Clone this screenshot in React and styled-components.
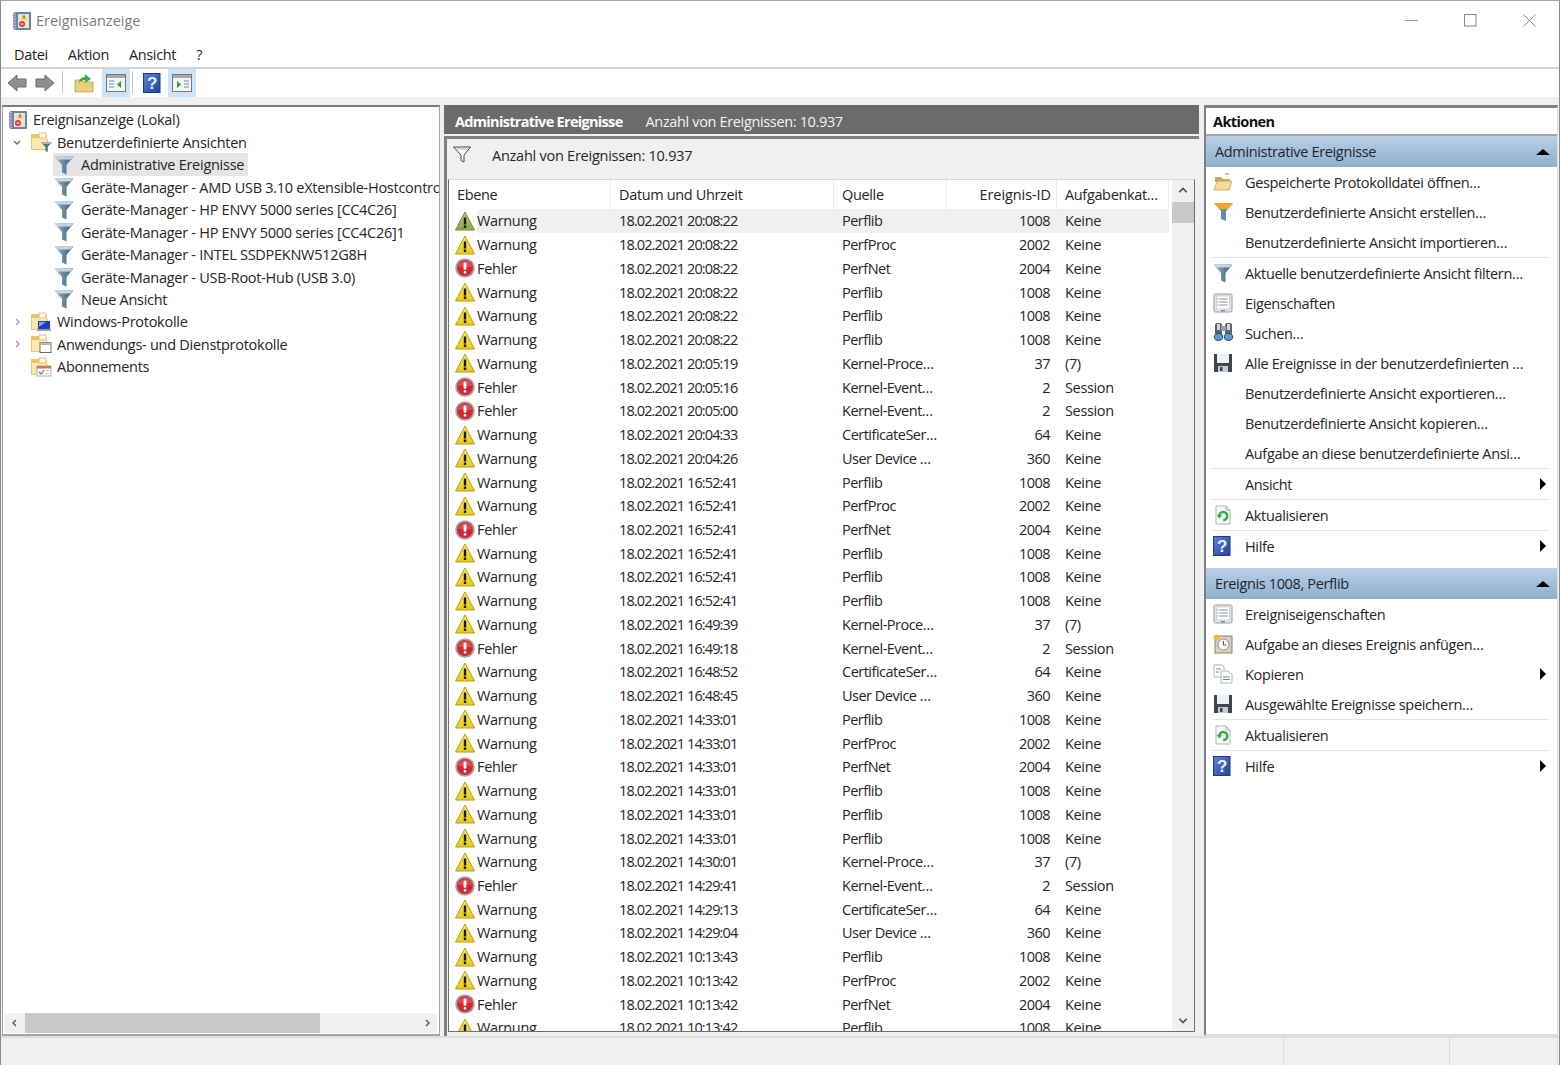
import React from "react";
import styled, { createGlobalStyle } from "styled-components";

const Global = createGlobalStyle`
  html, body { margin: 0; padding: 0; background: #fff; }
  * { box-sizing: border-box; }
  body {
    font-family: "Open Sans", "Noto Sans", "Liberation Sans", sans-serif;
    font-size: 14.5px;
    letter-spacing: -0.35px;
    color: #262626;
  }
`;

const Page = styled.div`
  width: 1560px;
  height: 1065px;
  display: flex;
  flex-direction: column;
  overflow: hidden;
  background: #f0f0f0;
  border-left: 1px solid #8a8a8a;
  border-right: 1px solid #8a8a8a;
  border-top: 1px solid #a8a8a8;
`;

const TitleBar = styled.div`
  height: 41px;
  flex: none;
  background: #fff;
  display: flex;
  align-items: center;
  padding: 0 0 2px 11px;
  gap: 4px;
  color: #7d7d7d;
  letter-spacing: -0.02px;
`;

const WindowButtons = styled.div`
  margin-left: auto;
  display: flex;
  align-items: center;
  gap: 46px;
  padding-right: 23px;
`;

const MenuBar = styled.div`
  height: 27px;
  flex: none;
  background: #fff;
  display: flex;
  align-items: center;
  gap: 20px;
  padding-left: 13px;
  border-bottom: 2px solid #d4d4d4;
  color: #1f1f1f;
`;

const Toolbar = styled.div`
  height: 28px;
  flex: none;
  background: #fff;
  display: flex;
  align-items: stretch;
  padding-left: 3px;
`;

const ToolButton = styled.div`
  width: ${(p) => p.$w || 28}px;
  display: flex;
  align-items: center;
  justify-content: center;
  background: ${(p) => (p.$active ? "#cce4f7" : "transparent")};
`;

const ToolSep = styled.div`
  width: 1px;
  margin: 2px 2px 3px;
  background: #c8c8c8;
`;

const Panels = styled.div`
  flex: 1;
  min-height: 0;
  display: flex;
  padding-top: 8px;
`;

const TreePanel = styled.div`
  width: 438px;
  margin-left: 1px;
  display: flex;
  flex-direction: column;
  background: #fff;
  border: 1px solid #a4a4a4;
  border-top: 2px solid #7d7d7d;
  border-bottom-width: 2px;
`;

const Tree = styled.div`
  flex: 1;
  padding-top: 1.5px;
  overflow: hidden;
  letter-spacing: -0.27px;
`;

const TreeRow = styled.div`
  height: 22.48px;
  display: flex;
  align-items: center;
  white-space: nowrap;
  padding-left: ${(p) => p.$indent}px;
`;

const Chevron = styled.span`
  width: 20px;
  flex: none;
  display: flex;
  justify-content: center;
  padding-right: 5px;
`;

const TreeLabel = styled.span`
  display: inline-flex;
  align-items: center;
  height: 22.48px;
  gap: ${(p) => p.$gap || 5}px;
  padding: 0 4px 0 1px;
  background: ${(p) => (p.$selected ? "#e5e5e5" : "transparent")};
`;

const HScroll = styled.div`
  height: 20px;
  flex: none;
  margin: 0 2px 1px;
  display: flex;
  align-items: center;
  background: #f0f0f0;
`;

const HThumb = styled.div`
  width: 295px;
  height: 20px;
  background: #c8c8c8;
`;

const ScrollEnd = styled.div`
  width: ${(p) => p.$w}px;
  height: ${(p) => p.$h}px;
  flex: none;
  display: flex;
  align-items: center;
  justify-content: center;
  margin-left: ${(p) => (p.$pushX ? "auto" : 0)};
  margin-top: ${(p) => (p.$pushY ? "auto" : 0)};
`;

const Center = styled.div`
  width: 755px;
  margin-left: 4px;
  display: flex;
  flex-direction: column;
`;

const CenterHead = styled.div`
  height: 29px;
  flex: none;
  background: #6b6b6b;
  color: #f4f4f4;
  display: flex;
  align-items: center;
  padding: 3px 0 0 11px;
  gap: 23px;
`;

const HeadTitle = styled.b`
  font-weight: 700;
  color: #fff;
  letter-spacing: -0.69px;
`;

const CenterBody = styled.div`
  flex: 1;
  min-height: 0;
  margin-top: 2px;
  display: flex;
  flex-direction: column;
  border-left: 3px solid #808080;
  border-top: 3px solid #808080;
  padding: 0 4px 4px 1px;
`;

const FilterBand = styled.div`
  height: 40px;
  flex: none;
  display: flex;
  align-items: center;
  padding: 0 0 8px 4px;
  gap: 20px;
  letter-spacing: -0.25px;
`;

const TableBox = styled.div`
  flex: 1;
  min-height: 0;
  display: flex;
  background: #fff;
  border-top: 1px solid #d8d8d8;
  border-right: 1px solid #6d6d6d;
  border-bottom: 1px solid #6d6d6d;
  border-left: 1px solid #6d6d6d;
`;

const TableMain = styled.div`
  flex: 1;
  min-width: 0;
  overflow: hidden;
`;

const columns = "162px 223px 113px 110px 112px";

const HeadRow = styled.div`
  display: grid;
  grid-template-columns: ${columns};
  height: 29.1px;
`;

const HeadCell = styled.div`
  display: flex;
  align-items: center;
  padding: 0 ${(p) => (p.$right ? 5 : 7)}px 0 8px;
  justify-content: ${(p) => (p.$right ? "flex-end" : "flex-start")};
  letter-spacing: ${(p) => (p.$right ? "-0.08px" : "inherit")};
  border-right: 1px solid #ececec;
  white-space: nowrap;
`;

const DataRow = styled.div`
  display: grid;
  grid-template-columns: ${columns};
  height: 23.74px;
  align-items: center;
`;

const LevelCell = styled.div`
  display: flex;
  align-items: center;
  gap: 2px;
  height: 100%;
  padding-left: 6px;
`;

const LevelText = styled.span`
  display: flex;
  align-items: center;
  height: 100%;
  flex: 1;
  background: ${(p) => (p.$selected ? "#f0f0f0" : "transparent")};
`;

const Cell = styled.div`
  display: flex;
  align-items: center;
  height: 100%;
  padding: 0 7px 0 8px;
  white-space: nowrap;
  letter-spacing: ${(p) => p.$spacing || "inherit"};
  justify-content: ${(p) => (p.$right ? "flex-end" : "flex-start")};
  background: ${(p) => (p.$selected ? "#f0f0f0" : "transparent")};
`;

const VScroll = styled.div`
  width: 22px;
  flex: none;
  display: flex;
  flex-direction: column;
  background: #f0f0f0;
`;

const VThumb = styled.div`
  height: 21px;
  background: #c8c8c8;
`;

const ActionsPanel = styled.div`
  width: 354px;
  margin-left: 5px;
  display: flex;
  flex-direction: column;
  background: #fff;
  border-left: 2px solid #808080;
  border-top: 3px solid #808080;
  border-bottom: 2px solid #dcdcdc;
  border-right: 1px solid #dcdcdc;
`;

const ActionsTitle = styled.div`
  height: 28px;
  flex: none;
  display: flex;
  align-items: center;
  padding: 1px 0 0 7px;
  font-weight: 700;
  color: #111;
  letter-spacing: -0.6px;
  border-bottom: 2px solid #a8a8a8;
`;

const SectionHead = styled.div`
  height: 31px;
  flex: none;
  margin-top: ${(p) => p.$gap || 0}px;
  display: flex;
  align-items: center;
  justify-content: space-between;
  padding: 0 7px 0 9px;
  background: linear-gradient(#b9d0e7, #8fafcf);
  color: #1c2530;
`;

const ActionRow = styled.div`
  height: ${(p) => p.$h || 30}px;
  flex: none;
  display: flex;
  align-items: center;
  padding-left: 7px;
  white-space: nowrap;
`;

const ActionIcon = styled.span`
  width: 32px;
  flex: none;
  display: flex;
`;

const ActionArrow = styled.span`
  margin-left: auto;
  width: 0;
  height: 0;
  margin-right: 11px;
  border-left: 6px solid #000;
  border-top: 6px solid transparent;
  border-bottom: 6px solid transparent;
`;

const UpTriangle = styled.span`
  width: 0;
  height: 0;
  border-bottom: 6px solid #000;
  border-left: 7px solid transparent;
  border-right: 7px solid transparent;
`;

const ActionSep = styled.div`
  height: 1px;
  flex: none;
  margin: 0 8px 0 6px;
  background: #e4e4e4;
`;

const StatusBar = styled.div`
  height: 29px;
  flex: none;
  display: flex;
  justify-content: flex-end;
  border-top: 2px solid #dedede;
`;

const StatusCell = styled.div`
  width: ${(p) => p.$w}px;
  border-left: 1px solid #dcdcdc;
`;

// icons, all hand drawn on a 20 unit grid
const Svg = ({ size = 20, w, h, children }) => (
  <svg width={w || size} height={h || size} viewBox={`0 0 ${w || size} ${h || size}`} style={{ flex: "none" }}>
    {children}
  </svg>
);

const BookIcon = () => (
  <Svg size={20}>
    <rect x="2" y="1" width="17" height="18" rx="1" fill="#6b82a8" />
    <rect x="1" y="2" width="3" height="16" fill="#aab4c6" />
    <path d="M1 4h3M1 7h3M1 10h3M1 13h3M1 16h3" stroke="#5a6a84" strokeWidth=".8" />
    <rect x="6" y="3" width="11" height="14" fill="#e9e2cf" />
    <path d="M12 3l3 5.5H9z" fill="#f2c230" />
    <rect x="11.5" y="4.6" width="1" height="2.6" fill="#6a4d10" />
    <circle cx="10" cy="13" r="3" fill="#cf3d45" />
    <rect x="8.6" y="12.5" width="2.8" height="1" fill="#fff" />
  </Svg>
);

const FolderBase = () => (
  <>
    <path d="M1 2h9l1 1h6v4h1v11H1z" fill="#e6c66c" />
    <rect x="2" y="6" width="15" height="11" fill="#fbe9ae" />
    <rect x="9" y="1" width="7" height="5" fill="#fff8e0" stroke="#cdb36a" strokeWidth=".7" />
  </>
);

const FolderFilterIcon = () => (
  <Svg w={22} h={20}>
    <FolderBase />
    <path d="M11 10.5h11l-4.3 4.2V20l-2.4-1.2v-4.1z" fill="#4e7790" />
    <path d="M11 10.5h11l-1.6 1.6h-7.8z" fill="#9cbacb" />
  </Svg>
);

const FolderLogIcon = () => (
  <Svg w={22} h={20}>
    <FolderBase />
    <rect x="8" y="9" width="12" height="8" fill="#1b3fb8" />
    <path d="M9 10h7l-7 5z" fill="#86a8ee" />
    <rect x="7" y="17" width="14" height="2" fill="#9a9a9a" />
  </Svg>
);

const FolderAppIcon = () => (
  <Svg w={22} h={20}>
    <FolderBase />
    <rect x="10" y="8.5" width="11" height="10" fill="#fff" stroke="#6e6e6e" />
    <rect x="10" y="8.5" width="11" height="2.5" fill="#b8b8b8" />
  </Svg>
);

const FolderSubsIcon = () => (
  <Svg w={22} h={20}>
    <FolderBase />
    <rect x="7" y="9" width="14" height="10" fill="#fff" stroke="#b0b0b0" />
    <rect x="7" y="9" width="14" height="2.5" fill="#e86a5a" />
    <path d="M9 15l2 2 3-4" stroke="#3a78c0" strokeWidth="1.2" fill="none" />
    <rect x="16" y="13" width="3" height="1" fill="#c0c0c0" />
    <rect x="16" y="16" width="3" height="1" fill="#c0c0c0" />
  </Svg>
);

const FunnelIcon = ({ id = "fn" }) => (
  <Svg size={20}>
    <defs>
      <linearGradient id={id} x1="0" y1="0" x2="1" y2="0">
        <stop offset="0" stopColor="#a4bfd2" />
        <stop offset="0.55" stopColor="#5f8299" />
        <stop offset="1" stopColor="#3f6076" />
      </linearGradient>
    </defs>
    <path d="M0.5 1.5h19l-7 8.5v9.5l-4.5-2V10z" fill={`url(#${id})`} />
    <path d="M0.5 1.5h19l-3 3H3.5z" fill="#c3d6e3" />
  </Svg>
);

const PlainFunnel = () => (
  <Svg size={20}>
    <path d="M1.5 2h17l-6.5 8v7l-3-1.5V10z" fill="#fdfdfd" stroke="#444" strokeWidth="1" />
    <path d="M4.5 4h11" stroke="#aaa" />
  </Svg>
);

const WarnIcon = ({ selected }) => (
  <Svg size={20}>
    <defs>
      <linearGradient id={selected ? "wg" : "wy"} x1="0" y1="0" x2="0" y2="1">
        <stop offset="0" stopColor={selected ? "#b4cc72" : "#fbee55"} />
        <stop offset="1" stopColor={selected ? "#8aa844" : "#e8c81c"} />
      </linearGradient>
    </defs>
    <path
      d="M10 1l9.5 18H.5z"
      fill={`url(#${selected ? "wg" : "wy"})`}
      stroke={selected ? "#72903c" : "#b89c18"}
      strokeWidth="1"
      strokeLinejoin="round"
    />
    <rect x="8.8" y="6.5" width="2.4" height="7" fill="#171717" />
    <rect x="8.8" y="14.5" width="2.4" height="2.4" fill="#171717" />
  </Svg>
);

const ErrorIcon = () => (
  <Svg size={20}>
    <circle cx="10" cy="10" r="9.8" fill="#a8a8a8" />
    <circle cx="10" cy="10" r="8" fill="#cf2a32" />
    <path d="M3 9a7 6 0 0 1 14 0z" fill="#e26a6e" opacity=".55" />
    <rect x="8.6" y="4.4" width="2.8" height="7.4" rx="1.2" fill="#fff" />
    <rect x="8.7" y="13" width="2.6" height="2.6" rx="1.2" fill="#fff" />
  </Svg>
);

const BackArrow = ({ flip }) => (
  <Svg w={22} h={20}>
    <path
      d={flip ? "M2 6h9V2l9 8-9 8v-4H2z" : "M20 6h-9V2L2 10l9 8v-4h9z"}
      fill="#8f8f8f"
      stroke="#6f6f6f"
      strokeWidth="1"
      strokeLinejoin="round"
    />
  </Svg>
);

const FolderUpIcon = () => (
  <Svg size={20}>
    <path d="M1 7h7l2 2h9v10H1z" fill="#e9cf7c" stroke="#b89a48" strokeWidth=".7" />
    <path d="M5 10c0-4 3-6 6-6V1l6 5-6 4V7c-2 0-4 1-6 3z" fill="#3faa3f" />
  </Svg>
);

const PaneIcon = ({ right }) => (
  <Svg w={20} h={18}>
    <rect x=".5" y=".5" width="19" height="17" fill="#f4f4f4" stroke="#777" />
    <rect x="1" y="1" width="18" height="3" fill="#a8a8a8" />
    {right ? (
      <>
        <path d="M5 7v7l4-3.5z" fill="#2fa04a" />
        <path d="M12 7h5M12 10h5M12 13h5" stroke="#6d88a8" strokeWidth="1.2" />
      </>
    ) : (
      <>
        <path d="M3 7h5M3 10h5M3 13h5" stroke="#6d88a8" strokeWidth="1.2" />
        <path d="M15 7v7l-4-3.5z" fill="#2fa04a" />
      </>
    )}
  </Svg>
);

const HelpText = styled.text`
  font-family: "Liberation Sans", sans-serif;
  font-weight: 700;
  font-size: 17px;
  letter-spacing: 0;
  fill: #e8eefc;
`;

const HelpIcon = ({ h = 20 }) => (
  <Svg w={18} h={h}>
    <defs>
      <linearGradient id="hg" x1="0" y1="0" x2="1" y2="1">
        <stop offset="0" stopColor="#5c84d8" />
        <stop offset="1" stopColor="#22439c" />
      </linearGradient>
    </defs>
    <rect x=".5" y=".5" width="16.5" height={h - 1} fill="url(#hg)" stroke="#1b3a86" />
    <HelpText x="4" y={h / 2 + 6}>?</HelpText>
  </Svg>
);

const OpenFolderIcon = () => (
  <Svg size={20}>
    <path d="M2 5h6l2 2h7v3H2z" fill="#c8a860" />
    <path d="M1 18l3-9h15l-3 9z" fill="#f2dc9c" stroke="#b89a58" strokeWidth=".7" />
    <path d="M12 2h4" stroke="#55b055" />
  </Svg>
);

const PropsIcon = () => (
  <Svg size={20}>
    <rect x="1" y="1" width="18" height="18" rx="1.5" fill="#e6e6e6" stroke="#9a9a9a" />
    <rect x="3.5" y="3" width="13" height="13" fill="#fff" stroke="#bcbcbc" strokeWidth=".6" />
    <path d="M6.5 6h8M6.5 9h8M6.5 12h8" stroke="#7c8ea8" />
    <path d="M4.5 6h1M4.5 9h1M4.5 12h1" stroke="#3a78b8" />
    <rect x="8" y="17" width="4" height="1.5" fill="#3fa8c8" />
  </Svg>
);

const BinocularsIcon = () => (
  <Svg size={22}>
    <rect x="2" y="1" width="7" height="12" rx="2" fill="#59626e" />
    <rect x="12" y="1" width="7" height="12" rx="2" fill="#59626e" />
    <rect x="8" y="4" width="5" height="5" fill="#9aa2ac" />
    <rect x="4" y="2" width="3" height="6" fill="#d2d6dc" />
    <rect x="14" y="2" width="3" height="6" fill="#d2d6dc" />
    <ellipse cx="5.5" cy="15" rx="4.2" ry="3.4" fill="#5a9ce0" stroke="#345" />
    <ellipse cx="15.5" cy="15" rx="4.2" ry="3.4" fill="#5a9ce0" stroke="#345" />
  </Svg>
);

const SaveIcon = () => (
  <Svg size={20}>
    <path d="M1 1h18v18H1z" fill="#3f4650" />
    <rect x="4" y="1" width="12" height="9" fill="#eef0f2" />
    <rect x="5" y="13" width="10" height="6" fill="#c8ccd0" />
    <rect x="7" y="14" width="2.5" height="4" fill="#3f4650" />
  </Svg>
);

const RefreshIcon = () => (
  <Svg size={20}>
    <path d="M3 1h10l4 4v14H3z" fill="#fafafa" stroke="#b4b4b4" />
    <path d="M13 1v4h4" fill="#e0e0e0" stroke="#b4b4b4" />
    <path d="M6.2 11a4 4 0 1 1 4 4" stroke="#2fae45" strokeWidth="2.6" fill="none" />
    <path d="M3.6 10l2.8 3.6 2.8-3.6z" fill="#2fae45" />
  </Svg>
);

const TaskIcon = () => (
  <Svg size={20}>
    <rect x="2" y="2" width="17" height="17" fill="#d8cfc0" stroke="#96825f" />
    <circle cx="10.5" cy="10.5" r="5.5" fill="#fff" stroke="#888" />
    <path d="M10.5 7v4h3" stroke="#555" fill="none" />
    <circle cx="3.5" cy="3.5" r="3" fill="#f2b63c" />
  </Svg>
);

const CopyIcon = () => (
  <Svg size={20}>
    <path d="M1 1h8l2 2v10H1z" fill="#fff" stroke="#aeb8c4" />
    <path d="M8 7h7l4 3v9H8z" fill="#fff" stroke="#aeb8c4" />
    <path d="M3 5h5M3 8h3M10 13h7M10 15.5h7" stroke="#5a8cc0" />
  </Svg>
);

const OrangeFunnel = () => (
  <Svg size={20}>
    <path d="M1 1h19l-7 8v10l-5-2V9z" fill="#6d8ba0" />
    <path d="M1 1h19l-5 6H6z" fill="#f3a62c" />
  </Svg>
);

const Chev = ({ dir, color = "#6a6a6a", size = 8 }) => {
  const d = {
    down: "M1 3l3 3 3-3",
    right: "M3 1l3 3-3 3",
    up: "M1 5l3-3 3 3",
    left: "M5 1L2 4l3 3",
  }[dir];
  return (
    <svg width={size} height={size} viewBox="0 0 8 8" style={{ flex: "none" }}>
      <path d={d} fill="none" stroke={color} strokeWidth="1.4" />
    </svg>
  );
};

const MinIcon = () => (
  <svg width="13" height="13" viewBox="0 0 13 13"><path d="M0 6.5h13" stroke="#9a9a9a" /></svg>
);
const MaxIcon = () => (
  <svg width="13" height="13" viewBox="0 0 13 13"><rect x=".5" y=".5" width="11.5" height="11.5" fill="none" stroke="#8a8a8a" /></svg>
);
const CloseIcon = () => (
  <svg width="13" height="13" viewBox="0 0 13 13"><path d="M.5.5l12 12M12.5.5l-12 12" stroke="#8a8a8a" /></svg>
);

// data
const treeFilters = [
  "Geräte-Manager - AMD USB 3.10 eXtensible-Hostcontroller",
  "Geräte-Manager - HP ENVY 5000 series [CC4C26]",
  "Geräte-Manager - HP ENVY 5000 series [CC4C26]1",
  "Geräte-Manager - INTEL SSDPEKNW512G8H",
  "Geräte-Manager - USB-Root-Hub (USB 3.0)",
  "Neue Ansicht",
];

const sources = {
  lib: ["W", "Perflib", "1008", "Keine"],
  proc: ["W", "PerfProc", "2002", "Keine"],
  net: ["F", "PerfNet", "2004", "Keine"],
  kp: ["W", "Kernel-Proce…", "37", "(7)"],
  ke: ["F", "Kernel-Event…", "2", "Session"],
  cert: ["W", "CertificateSer…", "64", "Keine"],
  user: ["W", "User Device …", "360", "Keine"],
};

const events = [
  ["20:08:22", "lib"], ["20:08:22", "proc"], ["20:08:22", "net"], ["20:08:22", "lib"],
  ["20:08:22", "lib"], ["20:08:22", "lib"], ["20:05:19", "kp"], ["20:05:16", "ke"],
  ["20:05:00", "ke"], ["20:04:33", "cert"], ["20:04:26", "user"], ["16:52:41", "lib"],
  ["16:52:41", "proc"], ["16:52:41", "net"], ["16:52:41", "lib"], ["16:52:41", "lib"],
  ["16:52:41", "lib"], ["16:49:39", "kp"], ["16:49:18", "ke"], ["16:48:52", "cert"],
  ["16:48:45", "user"], ["14:33:01", "lib"], ["14:33:01", "proc"], ["14:33:01", "net"],
  ["14:33:01", "lib"], ["14:33:01", "lib"], ["14:33:01", "lib"], ["14:30:01", "kp"],
  ["14:29:41", "ke"], ["14:29:13", "cert"], ["14:29:04", "user"], ["10:13:43", "lib"],
  ["10:13:42", "proc"], ["10:13:42", "net"], ["10:13:42", "lib"],
];

const Action = ({ icon, children, arrow, h }) => (
  <ActionRow $h={h}>
    <ActionIcon>{icon}</ActionIcon>
    {children}
    {arrow && <ActionArrow />}
  </ActionRow>
);

const EventRow = ({ time, src, selected }) => {
  const [kind, source, id, task] = sources[src];
  return (
    <DataRow>
      <LevelCell>
        {kind === "W" ? <WarnIcon selected={selected} /> : <ErrorIcon />}
        <LevelText $selected={selected}>{kind === "W" ? "Warnung" : "Fehler"}</LevelText>
      </LevelCell>
      <Cell $selected={selected} $spacing="-0.88px">18.02.2021 {time}</Cell>
      <Cell $selected={selected} $spacing="-0.5px">{source}</Cell>
      <Cell $selected={selected} $right $spacing="-0.55px">{id}</Cell>
      <Cell $selected={selected}>{task}</Cell>
    </DataRow>
  );
};

export default function App() {
  return (
    <Page>
      <Global />
      <TitleBar>
        <BookIcon />
        Ereignisanzeige
        <WindowButtons>
          <MinIcon />
          <MaxIcon />
          <CloseIcon />
        </WindowButtons>
      </TitleBar>
      <MenuBar>
        <span>Datei</span>
        <span>Aktion</span>
        <span>Ansicht</span>
        <span>?</span>
      </MenuBar>
      <Toolbar>
        <ToolButton $w={26}><BackArrow /></ToolButton>
        <ToolButton $w={30}><BackArrow flip /></ToolButton>
        <ToolSep />
        <ToolButton $w={37}><FolderUpIcon /></ToolButton>
        <ToolButton $active><PaneIcon /></ToolButton>
        <ToolSep />
        <ToolButton $w={33}><HelpIcon /></ToolButton>
        <ToolButton $active><PaneIcon right /></ToolButton>
      </Toolbar>
      <Panels>
        <TreePanel>
          <Tree>
            <TreeRow $indent={4}>
              <TreeLabel><BookIcon />Ereignisanzeige (Lokal)</TreeLabel>
            </TreeRow>
            <TreeRow $indent={6}>
              <Chevron><Chev dir="down" /></Chevron>
              <TreeLabel $gap={5}><FolderFilterIcon />Benutzerdefinierte Ansichten</TreeLabel>
            </TreeRow>
            <TreeRow $indent={50}>
              <TreeLabel $gap={7} $selected><FunnelIcon />Administrative Ereignisse</TreeLabel>
            </TreeRow>
            {treeFilters.map((name) => (
              <TreeRow $indent={50} key={name}>
                <TreeLabel $gap={7}><FunnelIcon />{name}</TreeLabel>
              </TreeRow>
            ))}
            <TreeRow $indent={6}>
              <Chevron><Chev dir="right" color="#a0a0a0" /></Chevron>
              <TreeLabel $gap={5}><FolderLogIcon />Windows-Protokolle</TreeLabel>
            </TreeRow>
            <TreeRow $indent={6}>
              <Chevron><Chev dir="right" color="#a0a0a0" /></Chevron>
              <TreeLabel $gap={5}><FolderAppIcon />Anwendungs- und Dienstprotokolle</TreeLabel>
            </TreeRow>
            <TreeRow $indent={26}>
              <TreeLabel $gap={5}><FolderSubsIcon />Abonnements</TreeLabel>
            </TreeRow>
          </Tree>
          <HScroll>
            <ScrollEnd $w={20} $h={20}><Chev dir="left" color="#555" /></ScrollEnd>
            <HThumb />
            <ScrollEnd $w={20} $h={20} $pushX><Chev dir="right" color="#555" /></ScrollEnd>
          </HScroll>
        </TreePanel>

        <Center>
          <CenterHead>
            <HeadTitle>Administrative Ereignisse</HeadTitle>
            <span>Anzahl von Ereignissen: 10.937</span>
          </CenterHead>
          <CenterBody>
            <FilterBand>
              <PlainFunnel />
              <span>Anzahl von Ereignissen: 10.937</span>
            </FilterBand>
            <TableBox>
              <TableMain>
                <HeadRow>
                  <HeadCell>Ebene</HeadCell>
                  <HeadCell>Datum und Uhrzeit</HeadCell>
                  <HeadCell>Quelle</HeadCell>
                  <HeadCell $right>Ereignis-ID</HeadCell>
                  <HeadCell>Aufgabenkat…</HeadCell>
                </HeadRow>
                {events.map(([time, src], i) => (
                  <EventRow key={i} time={time} src={src} selected={i === 0} />
                ))}
              </TableMain>
              <VScroll>
                <ScrollEnd $w={22} $h={22}><Chev dir="up" color="#505050" size={10} /></ScrollEnd>
                <VThumb />
                <ScrollEnd $w={22} $h={22} $pushY><Chev dir="down" color="#505050" size={10} /></ScrollEnd>
              </VScroll>
            </TableBox>
          </CenterBody>
        </Center>

        <ActionsPanel>
          <ActionsTitle>Aktionen</ActionsTitle>
          <SectionHead>Administrative Ereignisse<UpTriangle /></SectionHead>
          <Action icon={<OpenFolderIcon />}>Gespeicherte Protokolldatei öffnen…</Action>
          <Action icon={<OrangeFunnel />}>Benutzerdefinierte Ansicht erstellen…</Action>
          <Action>Benutzerdefinierte Ansicht importieren…</Action>
          <ActionSep />
          <Action icon={<FunnelIcon id="fn2" />}>Aktuelle benutzerdefinierte Ansicht filtern…</Action>
          <Action icon={<PropsIcon />}>Eigenschaften</Action>
          <Action icon={<BinocularsIcon />}>Suchen…</Action>
          <Action icon={<SaveIcon />}>Alle Ereignisse in der benutzerdefinierten …</Action>
          <Action>Benutzerdefinierte Ansicht exportieren…</Action>
          <Action>Benutzerdefinierte Ansicht kopieren…</Action>
          <Action>Aufgabe an diese benutzerdefinierte Ansi…</Action>
          <ActionSep />
          <Action arrow>Ansicht</Action>
          <ActionSep />
          <Action icon={<RefreshIcon />}>Aktualisieren</Action>
          <ActionSep />
          <Action icon={<HelpIcon />} arrow>Hilfe</Action>
          <SectionHead $gap={7}>Ereignis 1008, Perflib<UpTriangle /></SectionHead>
          <Action icon={<PropsIcon />}>Ereigniseigenschaften</Action>
          <Action icon={<TaskIcon />}>Aufgabe an dieses Ereignis anfügen…</Action>
          <Action icon={<CopyIcon />} arrow>Kopieren</Action>
          <Action icon={<SaveIcon />}>Ausgewählte Ereignisse speichern…</Action>
          <ActionSep />
          <Action icon={<RefreshIcon />}>Aktualisieren</Action>
          <ActionSep />
          <Action icon={<HelpIcon />} arrow>Hilfe</Action>
        </ActionsPanel>
      </Panels>
      <StatusBar>
        <StatusCell $w={166} />
        <StatusCell $w={108} />
        <StatusCell $w={2} />
      </StatusBar>
    </Page>
  );
}
